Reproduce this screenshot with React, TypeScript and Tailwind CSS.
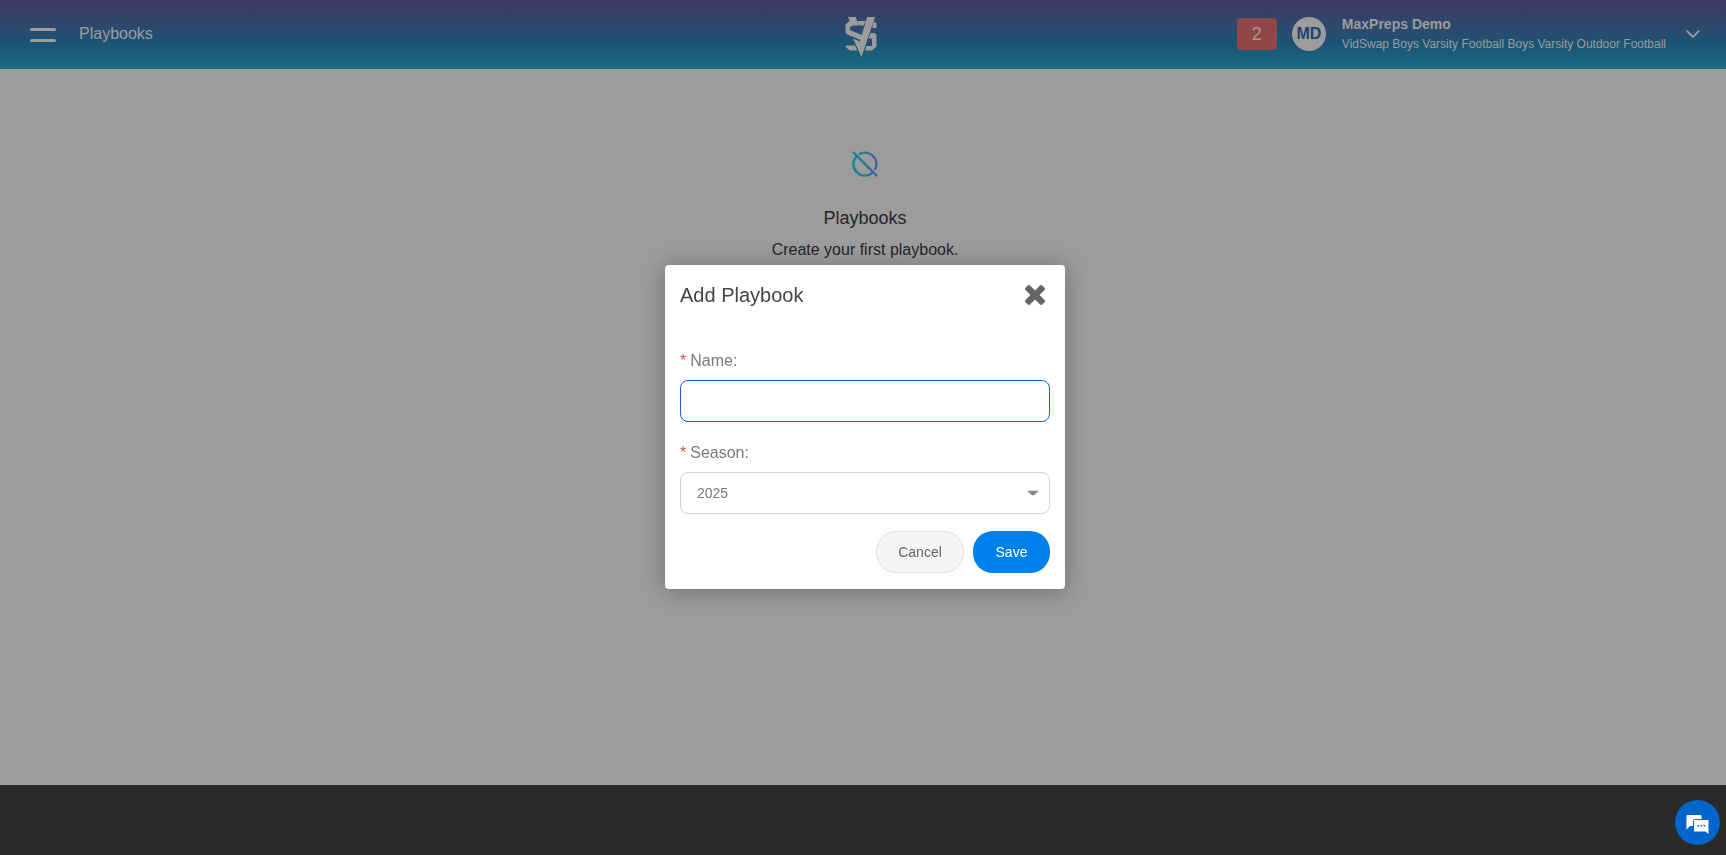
import { useState } from "react";
import type { ReactNode } from "react";

interface FieldProps {
  id: string;
  label: string;
  children: ReactNode;
}

const Logo = () => (
  <svg viewBox="0 0 32 40" className="w-8 h-10" fill="#9c9c9c" aria-label="VidSwap">
    {/* S */}
    <path d="M20.300 4H12.500l1.700 4.500h4.600z" />
    <path d="M4 4.200h1.500l2 5.300H5v3.500l13 5.500-2.200 4.500L2 17.500.5 15.500V7.500z" />
    <path d="M29 4l2.500 2.700V11H27.500V8.500z" />
    <path d="M25.500 16h4.500l1.500 2v11.500l-4.500 4h-7l1.500-4.500h5.500v-7.500h-3.500z" />
    <path d="M.5 28.500h9.600l2.100 5H5l-4.500-3.500z" />
    {/* V */}
    <path d="M3 0h7.800l3 8.500H6.500z" />
    <path d="M22 0h8L16.500 40 8 21.500l7 3z" />
  </svg>
);

const EmptyIcon = () => (
  <svg viewBox="0 0 26 26" className="w-[26px] h-[26px]" fill="none" strokeWidth="2.4" strokeLinecap="round">
    <defs>
      <linearGradient id="emptyStroke" gradientUnits="userSpaceOnUse" x1="0" y1="0" x2="26" y2="0">
        <stop offset="0" stopColor="#128a95" />
        <stop offset="1" stopColor="#40609d" />
      </linearGradient>
    </defs>
    <g stroke="url(#emptyStroke)">
      <path d="M1.600 1.600l22.800 22.800" />
      <path d="M8 2.900a11.300 11.300 0 0 1 15.200 15.100" />
      <path d="M4.300 5.800a11.300 11.300 0 0 0 15.900 16" />
    </g>
  </svg>
);

const CloseIcon = () => (
  <svg viewBox="302 366 1188 1188" className="w-5 h-5" fill="currentColor">
    <path d="M1490 1322q0 40-28 68l-136 136q-28 28-68 28t-68-28l-294-294-294 294q-28 28-68 28t-68-28l-136-136q-28-28-28-68t28-68l294-294-294-294q-28-28-28-68t28-68l136-136q28-28 68-28t68 28l294 294 294-294q28-28 68-28t68 28l136 136q28 28 28 68t-28 68l-294 294 294 294q28 28 28 68z" />
  </svg>
);

const ChatIcon = () => (
  <svg viewBox="0 0 24 20" className="w-6 h-5">
    <path d="M1.500 0h13a1 1 0 0 1 1 1v10H4L0.500 14.500V1a1 1 0 0 1 1-1z" fill="#fff" />
    <path d="M8.500 4.500h13.500a1 1 0 0 1 1 1V20l-3.500-3H8.500a1 1 0 0 1-1-1V5.500a1 1 0 0 1 1-1z" fill="#fff" stroke="#0066cc" />
    <path d="M11.500 10h1.600v1.600h-1.600zM14.500 10h1.600v1.600h-1.600zM17.500 10h1.600v1.600h-1.600z" fill="#0066cc" />
  </svg>
);

const Header = () => (
  <header className="grid grid-cols-[1fr_auto_1fr] items-center h-[69px] pl-[30px] pr-[26px] bg-linear-to-b from-[#3c3860] via-[#1b5274] via-60% to-[#186b81] text-[#9c9c9c]">
    <div className="flex items-center gap-[23px]">
      <button className="flex flex-col gap-2 w-[26px]" aria-label="Open menu">
        <span className="h-[3px] w-full rounded-full bg-[#9c9c9c]" />
        <span className="h-[3px] w-full rounded-full bg-[#9c9c9c]" />
      </button>
      <span className="pb-0.5 text-base">Playbooks</span>
    </div>

    <div className="pt-1 pr-2">
      <Logo />
    </div>

    <div className="flex items-center justify-end pb-0.5">
      <button className="w-10 h-8 mr-[15px] rounded bg-[#914747] text-lg leading-none">2</button>
      <div className="flex items-center justify-center w-[34px] h-[34px] mr-4 rounded-full bg-[#9c9c9c] text-[#22416f] text-base font-bold">
        MD
      </div>
      <div className="flex flex-col mr-5">
        <span className="text-sm font-bold">MaxPreps Demo</span>
        <span className="text-xs leading-5">VidSwap Boys Varsity Football Boys Varsity Outdoor Football</span>
      </div>
      <button aria-label="Switch team">
        <svg viewBox="0 0 14 8" className="w-[14px] h-2" fill="none" stroke="currentColor" strokeWidth="1.8">
          <path d="M.7.7L7 7 13.300.7" />
        </svg>
      </button>
    </div>
  </header>
);

const Field = ({ id, label, children }: FieldProps) => (
  <div className="flex flex-col gap-[7px]">
    <label htmlFor={id} className="flex gap-1 text-base leading-6 text-[#7a7a7a]">
      <span className="text-[#e05050]">*</span>
      {label}
    </label>
    {children}
  </div>
);

const AddPlaybookDialog = () => {
  const [name, setName] = useState("");
  const [season, setSeason] = useState("2025");

  return (
    <form
      role="dialog"
      aria-labelledby="dialog-title"
      className="w-[400px] px-[15px] pt-[14px] pb-4 rounded bg-white shadow-[0_2px_24px_rgba(0,0,0,0.3)]"
      onSubmit={(e) => e.preventDefault()}
    >
      <div className="flex items-center justify-between h-8 pr-[5px] mb-[38px]">
        <h2 id="dialog-title" className="text-xl text-[#444]">Add Playbook</h2>
        <button type="button" className="text-[#666]" aria-label="Close">
          <CloseIcon />
        </button>
      </div>

      <div className="flex flex-col gap-[19px]">
        <Field id="name" label="Name:">
          <input
            id="name"
            value={name}
            onChange={(e) => setName(e.target.value)}
            className="w-full h-[42px] px-4 rounded-lg border border-[#0f5df0] text-sm text-[#7a7a7a] outline-none"
          />
        </Field>

        <Field id="season" label="Season:">
          <div className="relative">
            <select
              id="season"
              value={season}
              onChange={(e) => setSeason(e.target.value)}
              className="w-full h-[42px] px-4 appearance-none rounded-lg border border-[#d2d2d2] bg-white text-sm text-[#7a7a7a]"
            >
              <option>2025</option>
            </select>
            <svg viewBox="0 0 10 5" className="absolute right-3 top-1/2 w-[10px] h-[5px] -translate-y-1/2 pointer-events-none" fill="#8a8a8a">
              <path d="M0 0h10v1L6 5H4L0 1z" />
            </svg>
          </div>
        </Field>
      </div>

      {/* Actions */}
      <div className="flex justify-end gap-[9px] mt-[17px]">
        <button type="button" className="w-[88px] h-[42px] rounded-[20px] border border-[#e0e0e0] bg-[#f5f5f5] text-sm text-[#666]">
          Cancel
        </button>
        <button type="submit" className="w-[77px] h-[42px] rounded-[20px] bg-[#0080eb] text-sm text-white">
          Save
        </button>
      </div>
    </form>
  );
};

const App = () => {
  return (
    <div className="flex flex-col min-h-screen bg-[#9c9c9c] font-['Liberation_Sans',Arial,sans-serif]">
      <Header />

      <main className="flex flex-1 flex-col items-center pl-1 pt-[82px] text-[#262626]">
        <EmptyIcon />
        <h1 className="mt-[27px] text-lg">Playbooks</h1>
        <p className="mt-1.5 text-base">Create your first playbook.</p>
      </main>

      <footer className="h-[70px] bg-[#2a2a2a]" />

      {/* Dialog layer */}
      <div className="fixed inset-0 flex items-center justify-center pl-1 pb-px">
        <AddPlaybookDialog />
      </div>

      <button
        className="fixed right-[6px] bottom-[10px] flex items-center justify-center w-[45px] h-[45px] pt-1 rounded-full bg-[#0066cc]"
        aria-label="Open chat"
      >
        <ChatIcon />
      </button>
    </div>
  );
};

export default App;
